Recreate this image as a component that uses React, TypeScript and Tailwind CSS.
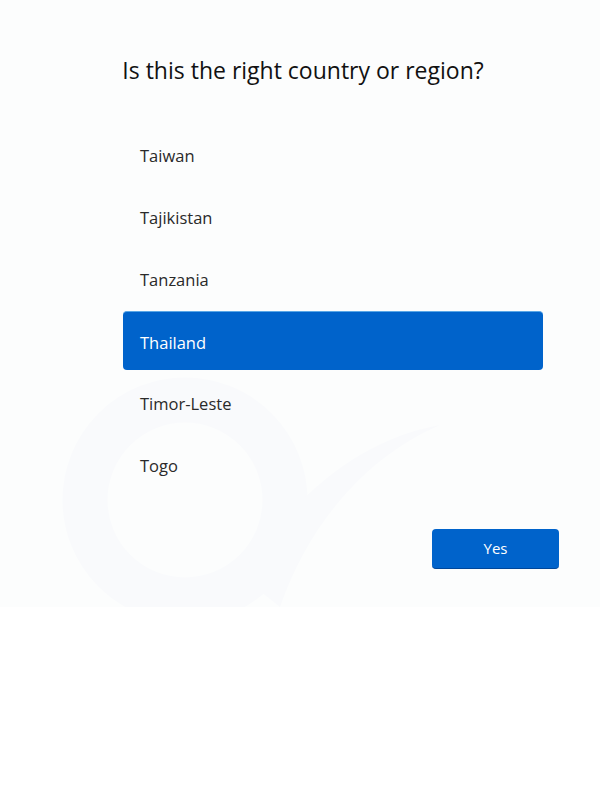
import { useState } from "react";

const countries = [
  "Taiwan",
  "Tajikistan",
  "Tanzania",
  "Thailand",
  "Timor-Leste",
  "Togo",
];

export default function App() {
  const [selected, setSelected] = useState("Thailand");

  return (
    <div
      className="min-h-[800px] bg-white"
      style={{ fontFamily: '"Open Sans", "Noto Sans", sans-serif' }}
    >
      <div className="relative h-[607px] overflow-hidden bg-[#fcfdfd]">
        {/* faint background swirl */}
        <svg
          className="pointer-events-none absolute left-0 top-0"
          width="600"
          height="607"
          viewBox="0 0 600 607"
        >
          <circle cx="185" cy="500" r="100" fill="none" stroke="#f9fafc" strokeWidth="45" />
          <path
            d="M240 575 C 300 490, 360 440, 440 425 C 370 455, 310 520, 280 607 Z"
            fill="#f9fafc"
          />
        </svg>

        <div className="relative">
          <h1 className="pl-[6px] pt-[53px] text-center text-[23px] leading-[34px] text-[#111]">
            Is this the right country or region?
          </h1>

          <ul className="mx-[123px] mt-[38px] flex w-[420px] flex-col gap-[3px]">
            {countries.map((c) => (
              <li
                key={c}
                onClick={() => setSelected(c)}
                className={`flex h-[59px] items-center rounded-[4px] pl-[17px] pt-[4px] text-[16.5px] ${
                  selected === c
                    ? "border-t border-[#5aa7e6] bg-[#0063cb] text-white"
                    : "text-[#2a2a2a]"
                }`}
              >
                {c}
              </li>
            ))}
          </ul>

          <div className="mt-[35px] flex">
            <button className="ml-[432px] h-[40px] w-[127px] rounded-[4px] border-b border-[#00479a] bg-[#0063cb] text-[15px] text-white">
              Yes
            </button>
          </div>
        </div>
      </div>
    </div>
  );
}
